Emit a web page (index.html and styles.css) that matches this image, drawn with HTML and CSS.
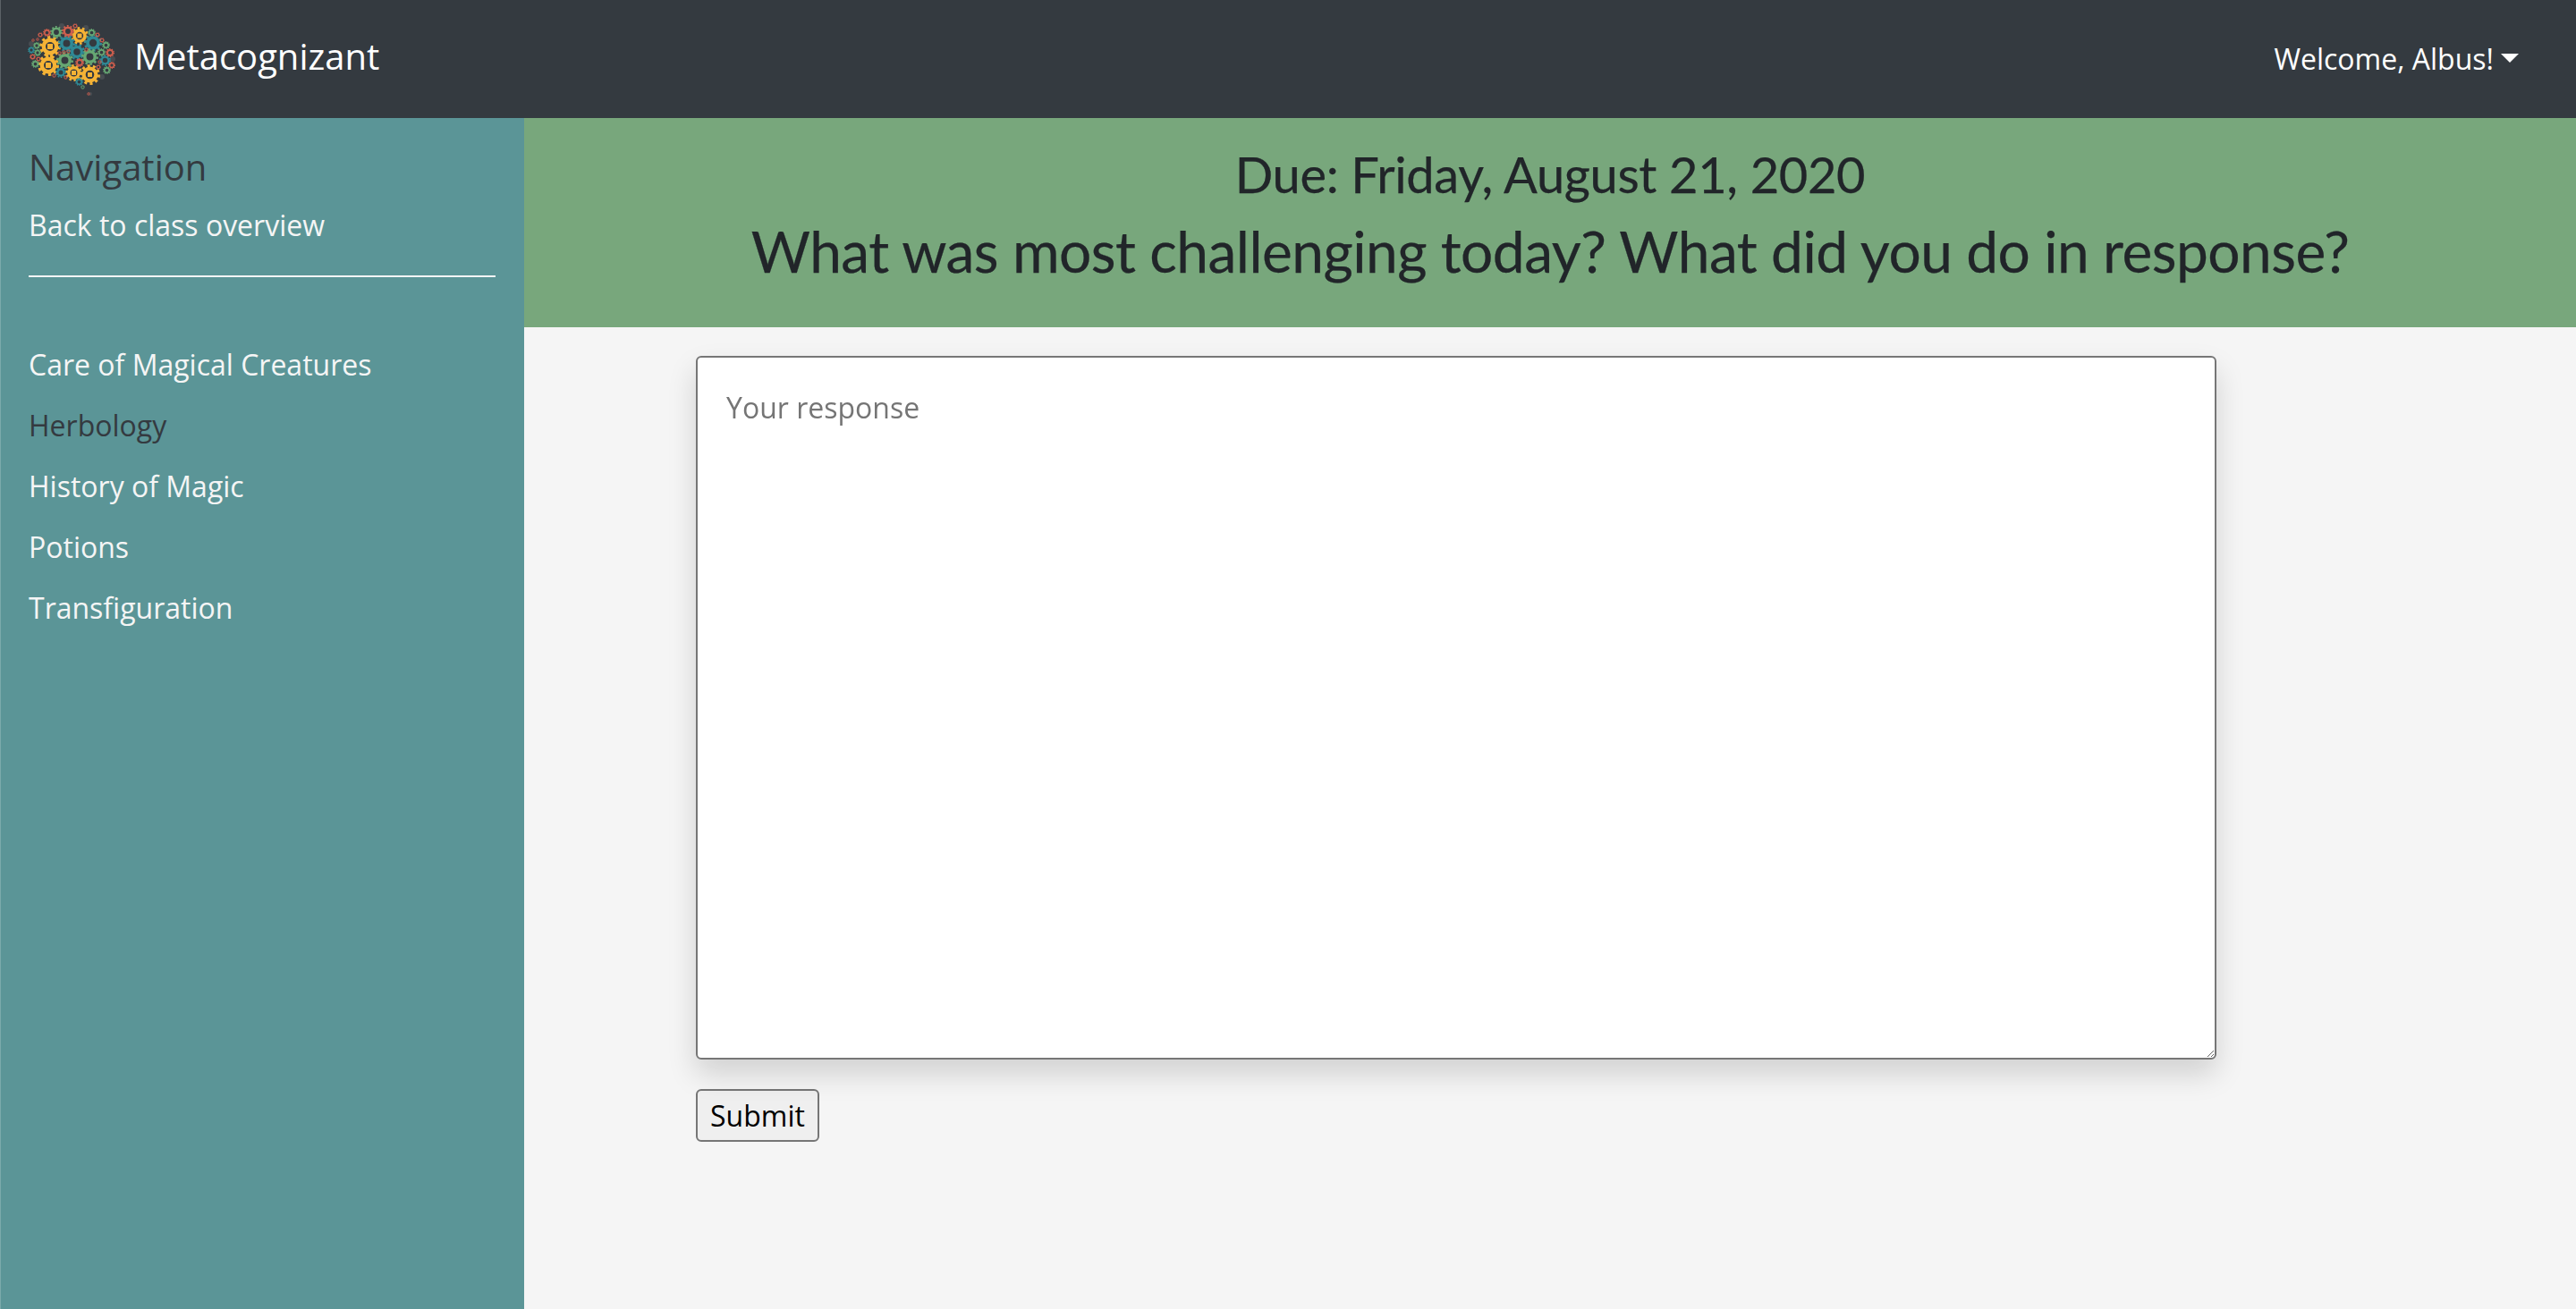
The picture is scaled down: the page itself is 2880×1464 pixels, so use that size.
FILE: index.html
```html
<!DOCTYPE html>
<html>
  <head>
    <title>Metacognizant</title>

    <link rel="stylesheet" href="styles.css">
  </head>
  <body>
    <nav class="navbar">
      <a class="brand" href="#">
        <svg class="logo" width="120" height="100" viewBox="0 0 120 100">
          <defs>
            <symbol id="gear" viewBox="0 0 24 24">
              <circle cx="12" cy="12" r="10.4" fill="none" stroke="currentColor" stroke-width="3.2" stroke-dasharray="3.2 3.33"></circle>
              <circle cx="12" cy="12" r="7.2" fill="none" stroke="currentColor" stroke-width="4.4"></circle>
            </symbol>
          </defs>
          <g class="gear-grey">
            <circle cx="50" cy="13" r="3"></circle>
            <circle cx="77" cy="15" r="3"></circle>
            <circle cx="107" cy="50" r="3"></circle>
            <circle cx="16" cy="33" r="3"></circle>
            <circle cx="82" cy="89" r="2"></circle>
            <circle cx="95" cy="70" r="3"></circle>
          </g>
          <g class="gear-yellow">
            <use href="#gear" x="25" y="24" width="24" height="24"></use>
            <use href="#gear" x="23" y="45" width="24" height="24"></use>
            <use href="#gear" x="60" y="14" width="20" height="20"></use>
            <use href="#gear" x="54" y="56" width="19" height="19"></use>
            <use href="#gear" x="70" y="56" width="23" height="23"></use>
            <rect x="34" y="33" width="6" height="6"></rect>
            <rect x="32" y="54" width="6" height="6"></rect>
            <rect x="67.5" y="21.5" width="5" height="5"></rect>
            <rect x="61" y="63" width="5" height="5"></rect>
            <rect x="79" y="65" width="5" height="5"></rect>
          </g>
          <g class="gear-teal">
            <use href="#gear" x="46" y="23" width="19" height="19"></use>
            <use href="#gear" x="75" y="22" width="20" height="20"></use>
            <use href="#gear" x="58" y="33" width="18" height="18"></use>
            <use href="#gear" x="92" y="45" width="13" height="13"></use>
            <use href="#gear" x="43" y="59" width="12" height="12"></use>
            <use href="#gear" x="12" y="36" width="8" height="8"></use>
            <use href="#gear" x="65" y="71" width="9" height="9"></use>
          </g>
          <g class="gear-green">
            <use href="#gear" x="37" y="13" width="14" height="14"></use>
            <use href="#gear" x="44" y="42" width="19" height="19"></use>
            <use href="#gear" x="72" y="38" width="19" height="19"></use>
            <use href="#gear" x="79" y="16" width="9" height="9"></use>
            <use href="#gear" x="95" y="30" width="9" height="9"></use>
            <use href="#gear" x="90" y="38" width="9" height="9"></use>
            <use href="#gear" x="18" y="31" width="8" height="8"></use>
            <use href="#gear" x="19" y="39" width="8" height="8"></use>
            <use href="#gear" x="16" y="51" width="9" height="9"></use>
            <use href="#gear" x="96" y="58" width="9" height="9"></use>
            <use href="#gear" x="71" y="79" width="5" height="5"></use>
          </g>
          <g class="gear-red">
            <use href="#gear" x="50" y="12" width="14" height="14"></use>
            <use href="#gear" x="99" y="38" width="10" height="10"></use>
            <use href="#gear" x="65" y="49" width="10" height="10"></use>
            <use href="#gear" x="102" y="53" width="8" height="8"></use>
            <use href="#gear" x="29" y="16" width="9" height="9"></use>
            <use href="#gear" x="23" y="20" width="6" height="6"></use>
            <use href="#gear" x="62" y="10" width="6" height="6"></use>
            <use href="#gear" x="87" y="20" width="6" height="6"></use>
            <use href="#gear" x="92" y="26" width="6" height="6"></use>
            <use href="#gear" x="14" y="44" width="7" height="7"></use>
            <use href="#gear" x="21" y="47" width="6" height="6"></use>
            <use href="#gear" x="88" y="56" width="6" height="6"></use>
            <use href="#gear" x="90" y="51" width="5" height="5"></use>
            <use href="#gear" x="45" y="41" width="5" height="5"></use>
            <use href="#gear" x="50" y="40" width="5" height="5"></use>
            <use href="#gear" x="55" y="39" width="5" height="5"></use>
            <use href="#gear" x="39" y="66" width="5" height="5"></use>
            <use href="#gear" x="52" y="68" width="5" height="5"></use>
            <use href="#gear" x="16" y="27" width="4" height="4"></use>
            <use href="#gear" x="21" y="26" width="4" height="4"></use>
            <use href="#gear" x="75" y="37" width="5" height="5"></use>
            <use href="#gear" x="78" y="87" width="4" height="4"></use>
          </g>
        </svg>
        <span class="brand-name">Metacognizant</span>
      </a>
      <a class="welcome" href="#">Welcome, Albus!<span class="caret"></span></a>
    </nav>

    <div class="page">
      <aside class="sidebar">
        <h4 class="sidebar-title">Navigation</h4>
        <a class="sidebar-back" href="#">Back to class overview</a>
        <hr class="sidebar-rule">
        <ul class="class-list">
          <li><a href="#">Care of Magical Creatures</a></li>
          <li><a class="active" href="#">Herbology</a></li>
          <li><a href="#">History of Magic</a></li>
          <li><a href="#">Potions</a></li>
          <li><a href="#">Transfiguration</a></li>
        </ul>
      </aside>

      <main class="content">
        <header class="prompt">
          <h3 class="due">Due: Friday, August 21, 2020</h3>
          <h2 class="question">What was most challenging today? What did you do in response?</h2>
        </header>
        <form class="response">
          <textarea class="response-box" placeholder="Your response"></textarea>
          <button class="submit" type="submit">Submit</button>
        </form>
      </main>
    </div>
  </body>
</html>
```

FILE: styles.css
```css
* {
  box-sizing: border-box;
}

html,
body {
  height: 100%;
}

body {
  margin: 0;
  display: flex;
  flex-direction: column;
  overflow: hidden;
  font-family: "Open Sans", sans-serif;
  font-size: 32px;
  background-color: #f5f5f5;
}

a {
  color: #fff;
  text-decoration: none;
}

.navbar {
  flex: 0 0 132px;
  display: flex;
  align-items: center;
  justify-content: space-between;
  padding: 0 64px 0 18px;
  background-color: #343a40;
  border-left: 1px solid rgba(255, 255, 255, 0.2);
}

.brand {
  display: flex;
  align-items: center;
  gap: 11px;
}

.logo {
  display: block;
  filter: blur(0.5px);
}

.brand-name {
  font-size: 40px;
  position: relative;
  top: -4px;
}

.gear-yellow {
  color: #f5b335;
  fill: #f5b335;
}

.gear-teal {
  color: #2f8a96;
}

.gear-green {
  color: #67a873;
}

.gear-red {
  color: #cf5f4e;
}

.gear-grey {
  fill: #484d52;
}

.welcome {
  display: flex;
  align-items: center;
  position: relative;
  top: -1px;
}

.caret {
  width: 0;
  height: 0;
  margin-left: 8px;
  border-top: 10px solid #fff;
  border-left: 10px solid transparent;
  border-right: 10px solid transparent;
}

.page {
  flex: 1;
  display: flex;
  min-height: 0;
}

.sidebar {
  flex: 0 0 586px;
  padding: 25px 32px 0 31px;
  background-color: #5b9597;
  border-left: 1px solid rgba(255, 255, 255, 0.2);
}

.sidebar a {
  color: #f5f5f5;
}

.sidebar-title {
  margin: 0;
  font-size: 40px;
  font-weight: 400;
  line-height: 60px;
  color: #343a40;
}

.sidebar-back {
  display: block;
  margin-top: 11px;
  line-height: 48px;
}

.sidebar-rule {
  margin: 32px 0 0;
  border: none;
  border-top: 2px solid #f5f5f5;
}

.class-list {
  margin: 64px 0 0;
  padding: 0;
  list-style: none;
}

.class-list li {
  line-height: 68px;
}

.sidebar .class-list .active {
  color: #343a40;
}

.content {
  flex: 1;
  min-width: 0;
}

.prompt {
  height: 234px;
  padding-top: 29px;
  text-align: center;
  font-family: Lato, sans-serif;
  color: #212529;
  background-color: #78a77c;
  -webkit-text-stroke: 0.25px #212529;
}

.due {
  margin: 0;
  font-size: 56px;
  font-weight: 400;
  line-height: 68px;
  letter-spacing: -0.35px;
}

.question {
  margin: 10px 0 0;
  font-size: 64px;
  font-weight: 400;
  line-height: 84px;
  letter-spacing: -0.52px;
}

.response {
  padding: 32px 0 0 192px;
}

.response-box {
  display: block;
  width: 1700px;
  height: 787px;
  padding: 32px 32px;
  font-family: inherit;
  font-size: 32px;
  line-height: 48px;
  background-color: #fff;
  border: 2px solid #767676;
  border-radius: 6px;
  box-shadow: 0 16px 32px rgba(0, 0, 0, 0.15);
  will-change: opacity;
}

.response-box::placeholder {
  color: #757575;
}

.submit {
  display: block;
  height: 59px;
  margin-top: 33px;
  padding: 0 14px;
  font-family: inherit;
  font-size: 32px;
  color: #000;
  background-color: #efefef;
  border: 2px solid #767676;
  border-radius: 6px;
}
```
